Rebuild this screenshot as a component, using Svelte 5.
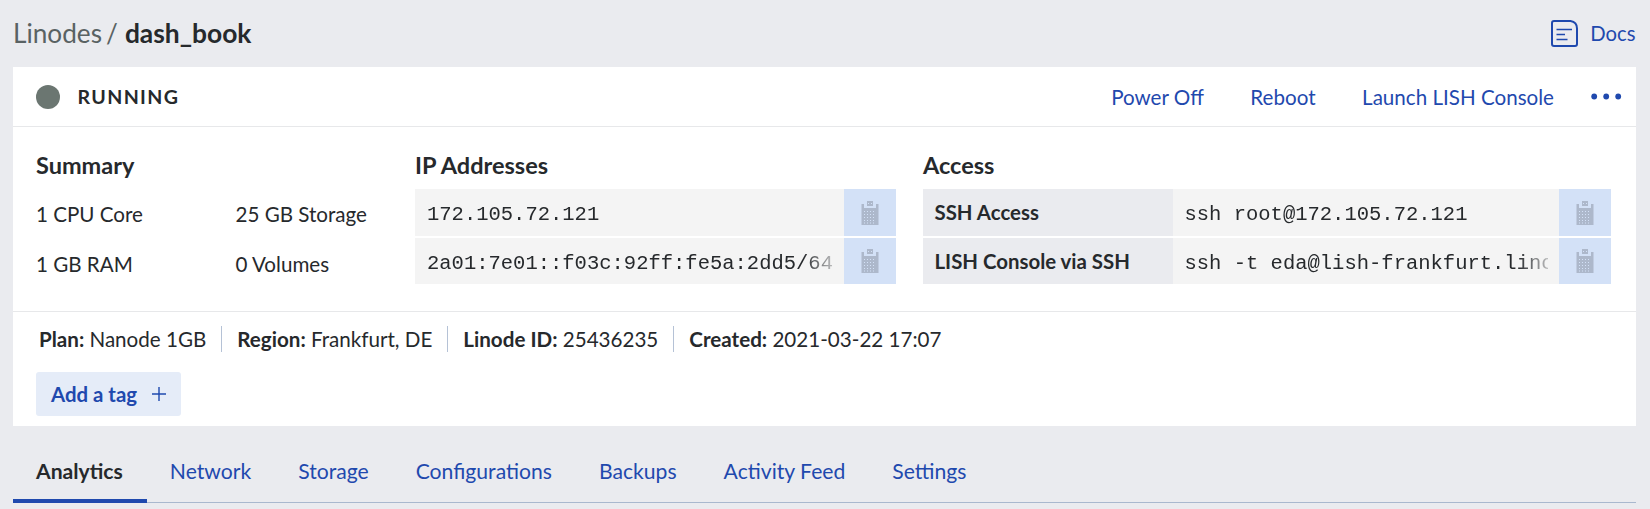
<script>
  const actions = ['Power Off', 'Reboot', 'Launch LISH Console'];
  const specs = ['1 CPU Core', '25 GB Storage', '1 GB RAM', '0 Volumes'];
  const addresses = ['172.105.72.121', '2a01:7e01::f03c:92ff:fe5a:2dd5/64'];
  const access = [
    { label: 'SSH Access', command: 'ssh root@172.105.72.121' },
    { label: 'LISH Console via SSH', command: 'ssh -t eda@lish-frankfurt.lino' }
  ];
  const details = [
    { label: 'Plan:', value: 'Nanode 1GB' },
    { label: 'Region:', value: 'Frankfurt, DE' },
    { label: 'Linode ID:', value: '25436235' },
    { label: 'Created:', value: '2021-03-22 17:07' }
  ];
  const tabs = ['Analytics', 'Network', 'Storage', 'Configurations', 'Backups', 'Activity Feed', 'Settings'];
  let current = 'Analytics';
</script>

{#snippet copyButton()}
  <button class="copy" aria-label="Copy">
    <svg width="18" height="26" viewBox="0 0 18 26">
      <path d="M6 1h6v5H6z" />
      <path d="M0.5 4h2.5v4h12V4h2.5v21H0.5z" />
      <path class="dots" d="M3 11.5h12M3 14.5h12M3 17.5h12M3 20.5h12M3 23h12M7 3.5h4" />
    </svg>
  </button>
{/snippet}

<main>
  <header>
    <h1><span class="parent">Linodes</span><span class="slash">/</span>dash_book</h1>
    <a class="docs" href="#docs">
      <svg width="27" height="27" viewBox="0 0 27 27" fill="none" stroke="currentColor" stroke-width="2">
        <path d="M3 1h16.5Q26 2 26 8.5V24a2 2 0 0 1-2 2H3a2 2 0 0 1-2-2V3a2 2 0 0 1 2-2z" />
        <path stroke-width="1.6" d="M5.5 9.5h15.5M5.5 14.5h8.5M5.5 19.5h11" />
      </svg>
      <span>Docs</span>
    </a>
  </header>

  <section class="card">
    <div class="status">
      <span class="dot"></span>
      <strong>RUNNING</strong>
      <nav>
        {#each actions as action}<a href="#action">{action}</a>{/each}
      </nav>
      <svg class="more" width="32" height="8" viewBox="0 0 32 8" fill="currentColor">
        <circle cx="3.2" cy="3.5" r="2.9" /><circle cx="15.2" cy="3.5" r="2.9" /><circle cx="27.2" cy="3.5" r="2.9" />
      </svg>
    </div>

    <div class="body">
      <div class="summary">
        <h2>Summary</h2>
        <div class="specs">
          {#each specs as spec}<span>{spec}</span>{/each}
        </div>
      </div>
      <div class="ips">
        <h2>IP Addresses</h2>
        {#each addresses as address}
          <div class="row">
            <div class="code"><span>{address}</span></div>
            {@render copyButton()}
          </div>
        {/each}
      </div>
      <div class="access">
        <h2>Access</h2>
        {#each access as item}
          <div class="row">
            <div class="label">{item.label}</div>
            <div class="code"><span>{item.command}</span></div>
            {@render copyButton()}
          </div>
        {/each}
      </div>
    </div>

    <div class="footer">
      <div class="details">
        {#each details as d}
          <div><b>{d.label}</b> {d.value}</div>
        {/each}
      </div>
      <button class="tag">
        Add a tag
        <svg width="14" height="14" viewBox="0 0 14 14" stroke="currentColor" stroke-width="1.4">
          <path d="M7 0v14M0 7h14" />
        </svg>
      </button>
    </div>
  </section>

  <div class="tabs">
    {#each tabs as tab}
      <button class:active={tab === current} onclick={() => (current = tab)}>{tab}</button>
    {/each}
  </div>
</main>

<style>
  :global(body) { background: #eaebef; }
  main {
    box-sizing: border-box;
    height: 509px;
    padding: 0 14.5px 0 13px;
    overflow: hidden;
    background: #eaebef;
    color: #26292c;
    font: 20.6px/26px Lato, sans-serif;
  }
  a { color: #1f49ae; text-decoration: none; }
  button { margin: 0; padding: 0; border: 0; background: none; font: inherit; cursor: pointer; }
  svg { display: block; flex: none; }
  header { display: flex; justify-content: space-between; align-items: center; height: 67px; }
  h1 { margin: 0; padding-bottom: 2px; font-size: 26.4px; line-height: 32px; font-weight: 700; }
  .parent, .slash { font-size: 26.2px; font-weight: 400; color: #596263; }
  .slash { margin: 0 7px 0 4px; }
  .docs { display: flex; align-items: center; gap: 12px; font-size: 20.3px; }
  .docs span { padding-bottom: 2px; }
  .card { height: 359px; background: #fff; }
  .status {
    display: flex;
    align-items: center;
    box-sizing: border-box;
    height: 60px;
    padding: 0 13px 0 23px;
    border-bottom: 1px solid #e7e8ea;
  }
  .dot { width: 24px; height: 24px; border-radius: 50%; background: #6b7671; }
  .status strong { margin-left: 17.5px; font-size: 19.6px; letter-spacing: 1.35px; }
  .status nav { display: flex; gap: 46.5px; margin-left: auto; }
  .more { margin-left: 36.5px; color: #1f49ae; }
  .body {
    display: flex;
    box-sizing: border-box;
    height: 185px;
    padding: 24px 0 0 23px;
    border-bottom: 1px solid #e7e8ea;
  }
  h2 { margin: 0 0 10px; font-size: 23.5px; line-height: 28px; font-weight: 700; }
  .summary { width: 379px; }
  .specs { display: grid; grid-template-columns: 199.5px auto; grid-auto-rows: 50px; align-items: center; }
  .ips { width: 481px; margin-right: 27px; }
  .access { width: 688px; }
  .row { display: flex; height: 47px; margin-bottom: 2px; overflow: hidden; }
  .row:last-child { height: 46px; }
  .label {
    flex: none;
    width: 238px;
    padding-left: 11.5px;
    background: #eaebef;
    font-size: 20.4px;
    line-height: 47px;
    font-weight: 700;
  }
  .code {
    flex: 1;
    min-width: 0;
    padding: 3px 11px 0 12px;
    background: #f4f4f4;
    font: 20.5px/46px "Liberation Mono", monospace;
  }
  .row:last-child .label { line-height: 46px; }
  .row:last-child .code { line-height: 45px; }
  .code span {
    display: block;
    overflow: hidden;
    white-space: nowrap;
    -webkit-mask-image: linear-gradient(to right, #000 calc(100% - 30px), #0004);
    mask-image: linear-gradient(to right, #000 calc(100% - 30px), #0004);
  }
  .copy { display: grid; place-items: center; flex: none; width: 52px; background: #d3e1f7; }
  .copy svg { fill: #adb8cb; }
  .copy .dots { stroke: #d3e1f7; stroke-width: 1; stroke-dasharray: 1 2; }
  .footer { padding: 14px 23px 0; }
  .details { display: flex; padding-left: 3px; }
  .details div { padding-right: 15px; margin-right: 15px; border-right: 1px solid #b5c2d6; white-space: nowrap; }
  .details div:last-child { border: 0; }
  .tag {
    display: flex;
    align-items: center;
    gap: 15px;
    height: 44.5px;
    margin-top: 19.5px;
    padding: 0 15px;
    border-radius: 3px;
    background: #e5ecf8;
    color: #1f49ae;
    font-size: 20.4px;
    font-weight: 700;
  }
  .tabs { display: flex; height: 77px; box-shadow: inset 0 -1px #a9b8ce; }
  .tabs button {
    box-sizing: border-box;
    padding: 17px 24px 0 23px;
    border-bottom: 4px solid transparent;
    color: #1f49ae;
    font-size: 21.15px;
  }
  .tabs .active { border-color: #1f49ae; color: #26292c; font-weight: 700; }
</style>
